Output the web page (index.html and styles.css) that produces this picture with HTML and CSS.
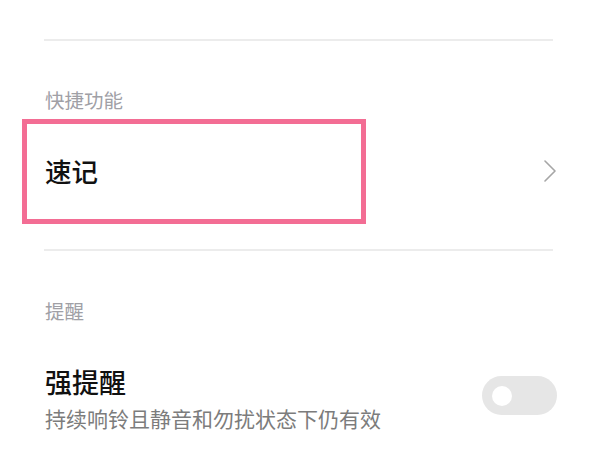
FILE: index.html
```html
<!DOCTYPE html>
<html lang="zh-CN">
<head>
<meta charset="utf-8">
<title>设置</title>
<link rel="stylesheet" href="styles.css">
</head>
<body>
<div class="page">
  <div class="top-space"></div>
  <div class="divider"></div>

  <div class="group-title first">快捷功能</div>
  <div class="row nav-row">
    <span class="row-title">速记</span>
    <svg class="chevron" width="12" height="22" viewBox="0 0 12 22">
      <polyline points="1,1 11,11 1,21" fill="none" stroke="#a6a6a6" stroke-width="1.6" stroke-linejoin="round" stroke-linecap="round"/>
    </svg>
    <div class="highlight"></div>
  </div>
  <div class="divider"></div>

  <div class="group-title second">提醒</div>
  <div class="row switch-row">
    <div class="texts">
      <div class="row-title">强提醒</div>
      <div class="row-sub">持续响铃且静音和勿扰状态下仍有效</div>
    </div>
    <div class="toggle"><div class="knob"></div></div>
  </div>
</div>
</body>
</html>
```
FILE: styles.css
```css
html, body {
  margin: 0;
  padding: 0;
  background: #ffffff;
}
body {
  width: 600px;
  height: 450px;
  overflow: hidden;
  font-family: "Noto Sans CJK SC", "Noto Sans", sans-serif;
}
.page {
  padding: 0 47px 0 44px;
}
.top-space {
  height: 39px;
}
.divider {
  height: 2px;
  background: #ececec;
}
.group-title {
  font-size: 19.5px;
  line-height: 26px;
  color: #a0a0a6;
  padding-left: 1px;
}
.group-title.first {
  margin-top: 46px;
}
.group-title.second {
  margin-top: 47px;
}
.row {
  position: relative;
  display: flex;
  justify-content: space-between;
}
.nav-row {
  align-items: center;
  padding: 40px 0 60px;
}
.row-title {
  font-size: 26.5px;
  line-height: 36px;
  font-weight: 500;
  color: #111111;
  padding-left: 1px;
}
.chevron {
  display: block;
  margin-right: -3px;
}
.highlight {
  position: absolute;
  left: -22px;
  top: 6px;
  width: 334px;
  height: 95px;
  border: 5px solid #f36d94;
}
.switch-row {
  align-items: flex-start;
  margin-top: 41px;
}
.switch-row .row-title {
  font-size: 27px;
  line-height: 34px;
}
.row-sub {
  margin-top: 5px;
  font-size: 21px;
  line-height: 28px;
  color: #7c7c7c;
  padding-left: 1px;
}
.toggle {
  width: 75px;
  height: 39px;
  margin-top: 11px;
  margin-right: -4px;
  border-radius: 20px;
  background: #e6e6e6;
  display: flex;
  align-items: center;
  padding-left: 10px;
  box-sizing: border-box;
}
.knob {
  width: 20px;
  height: 20px;
  border-radius: 50%;
  background: #ffffff;
}
```
